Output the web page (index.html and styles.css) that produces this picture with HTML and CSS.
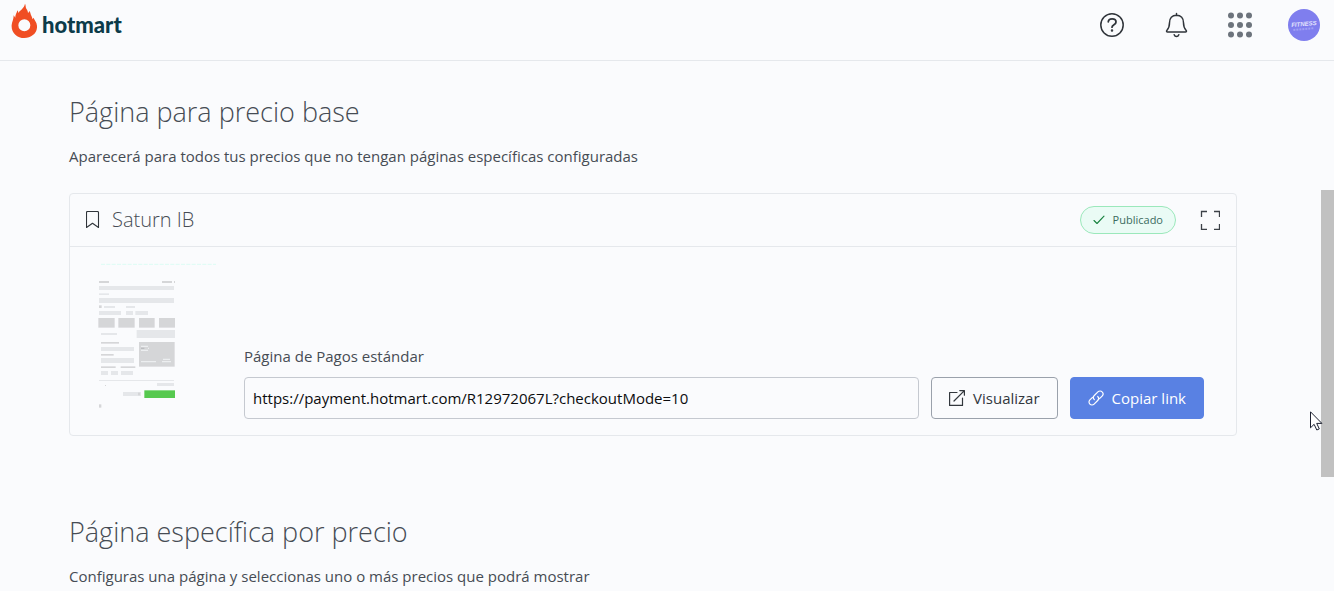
FILE: index.html
```html
<!DOCTYPE html>
<html lang="es">
<head>
    <meta charset="UTF-8">
    <meta name="viewport" content="width=device-width, initial-scale=1.0">
    <title>Hotmart - Páginas de pago</title>
    <link rel="stylesheet" href="styles.css">
</head>
<body>

    <header class="topbar">
        <a href="#" class="logo">
            <svg class="logo-flame" width="26" height="36" viewBox="0 0 78 108" aria-hidden="true">
                <path fill="#f04e23" fill-rule="evenodd" d="M42 2c3 5 1 11 5 17 2 3 4 7 4 11 2-1 3-3 4-6 4 4 3 9 6 14 2 4 3 7 3 11l3-5c4 8 10 13 11 24 2 22-16 37-38 37S0 89 2 66c1-10 6-16 6-29l5 7c-1-9 5-14 6-22 2 2 3 5 3 8 5-9 17-13 20-28zM40 49a18 18 0 1 0 0 36 18 18 0 0 0 0-36z"/>
            </svg>
            <span>hotmart</span>
        </a>
        <nav class="topbar-actions">
            <button class="icon-button" aria-label="Ayuda">
                <svg width="26" height="26" viewBox="0 0 26 26" fill="none" stroke="#2f343a" stroke-width="1.5" stroke-linecap="round">
                    <circle cx="13" cy="13" r="11.2"/>
                    <path stroke-width="1.8" d="M9.3 9.800c.1-2 1.700-3 3.800-3 2.300 0 3.900 1.200 3.900 3.100 0 3-4 2.500-4 5.300"/>
                    <circle cx="13" cy="18.600" r=".5" fill="#2f343a"/>
                </svg>
            </button>
            <button class="icon-button" aria-label="Notificaciones">
                <svg width="26" height="26" viewBox="0 0 26 26" fill="none" stroke="#2f343a" stroke-width="1.5" stroke-linecap="round" stroke-linejoin="round">
                    <path d="M13.500 1.500v2M13.500 3.300c-4.400 0-7 3-7 7.500 0 4.200-.7 5.500-2.500 7.400-.9 1-.4 1.900.6 1.900h17.800c1 0 1.500-.9.6-1.900-1.800-1.900-2.500-3.200-2.500-7.400 0-4.500-2.600-7.500-7-7.500z"/>
                    <path d="M11.200 22.700c.4 1.100 1.200 1.700 2.300 1.700s1.900-.6 2.300-1.700"/>
                </svg>
            </button>
            <button class="icon-button" aria-label="Aplicaciones">
                <svg width="26" height="26" viewBox="0 0 26 26" fill="#6c737c">
                    <circle cx="4" cy="3.500" r="3"/><circle cx="13" cy="3.500" r="3"/><circle cx="22" cy="3.500" r="3"/>
                    <circle cx="4" cy="13" r="3"/><circle cx="13" cy="13" r="3"/><circle cx="22" cy="13" r="3"/>
                    <circle cx="4" cy="22.500" r="3"/><circle cx="13" cy="22.500" r="3"/><circle cx="22" cy="22.500" r="3"/>
                </svg>
            </button>
            <button class="avatar" aria-label="Perfil">
                <svg width="32" height="32" viewBox="0 0 32 32">
                    <circle cx="16" cy="16" r="16" fill="#7f7eee"/>
                    <g transform="rotate(-5 16 16)">
                        <text class="avatar-text" x="16" y="17" text-anchor="middle">FITNESS</text>
                        <path d="M5 20h20" stroke="#a09ff4" stroke-width="2" stroke-dasharray="2 1"/>
                    </g>
                </svg>
            </button>
        </nav>
    </header>

    <main class="content">
        <section class="section">
            <h2 class="section-title">Página para precio base</h2>
            <p class="section-text">Aparecerá para todos tus precios que no tengan páginas específicas configuradas</p>

            <article class="card">
                <div class="card-header">
                    <svg width="14" height="18" viewBox="0 0 14 18" fill="none" stroke="#2f343a" stroke-width="1.1" stroke-linejoin="round" aria-hidden="true">
                        <path d="M.5 1.500c0-.6.400-1 1-1h10c.6 0 1 .4 1 1v15l-6-4.200-6 4.200z"/>
                    </svg>
                    <h3 class="card-title">Saturn IB</h3>
                    <span class="badge">
                        <svg width="12" height="10" viewBox="0 0 12 10" fill="none" stroke="#15803d" stroke-width="1.1" stroke-linecap="round" stroke-linejoin="round" aria-hidden="true">
                            <path d="M1 5.500l3 3L11 1.200"/>
                        </svg>
                        Publicado
                    </span>
                    <button class="icon-button" aria-label="Ampliar">
                        <svg width="20" height="20" viewBox="0 0 20 20" fill="none" stroke="#3c4147" stroke-width="1.3">
                            <path d="M1.500 7V1.500H7M14 1.500h5.500V7M19.500 14v5.500H14M7 19.500H1.500V14"/>
                        </svg>
                    </button>
                </div>

                <div class="card-body">
                    <!-- miniature of the checkout page -->
                    <svg class="preview" width="134" height="164" viewBox="6 -3 402 492" aria-hidden="true">
                        <path d="M51 25h345" stroke="#dcfcf4" stroke-width="3" stroke-dasharray="12 4"/>
                        <g fill="#e5e7ea">
                            <rect x="45" y="90" width="225" height="12"/>
                            <rect x="45" y="112" width="30" height="5"/>
                            <rect x="45" y="126" width="225" height="15"/>
                            <rect x="60" y="150" width="33" height="6"/>
                            <rect x="126" y="150" width="27" height="6"/>
                            <rect x="45" y="165" width="66" height="12"/>
                            <rect x="126" y="165" width="21" height="12"/>
                            <rect x="154" y="165" width="38" height="12"/>
                            <rect x="51" y="231" width="48" height="6"/>
                            <rect x="158" y="222" width="115" height="24"/>
                            <rect x="51" y="273" width="99" height="12"/>
                            <rect x="51" y="306" width="99" height="15"/>
                            <rect x="51" y="345" width="21" height="12"/>
                            <rect x="81" y="345" width="21" height="12"/>
                            <rect x="111" y="345" width="36" height="12"/>
                            <rect x="45" y="372" width="225" height="3"/>
                            <rect x="219" y="381" width="51" height="9"/>
                            <rect x="117" y="408" width="54" height="12"/>
                        </g>
                        <g fill="#d5d6d8">
                            <rect x="45" y="75" width="30" height="6"/>
                            <rect x="234" y="75" width="30" height="6"/>
                            <rect x="270" y="75" width="3" height="6"/>
                            <rect x="45" y="148" width="8" height="8"/>
                            <rect x="43" y="186" width="49" height="29"/>
                            <rect x="103" y="186" width="49" height="29"/>
                            <rect x="165" y="186" width="47" height="29"/>
                            <rect x="225" y="186" width="48" height="29"/>
                            <rect x="51" y="258" width="54" height="5"/>
                            <rect x="51" y="294" width="38" height="5"/>
                            <rect x="51" y="331" width="44" height="5"/>
                            <rect x="110" y="331" width="44" height="5"/>
                            <rect x="165" y="258" width="107" height="74"/>
                            <rect x="162" y="410" width="6" height="8"/>
                            <rect x="45" y="445" width="7" height="10"/>
                            <rect x="63" y="387" width="3" height="3"/>
                        </g>
                        <path d="M171 271h21M171 283h21M192 277h3M171 317h45M237 310h21M234 317h27" stroke="#eceef0" stroke-width="4"/>
                        <path d="M171 277h10" stroke="#bbbdc0" stroke-width="4"/>
                        <rect x="181" y="403" width="92" height="23" fill="#56c94f"/>
                    </svg>

                    <div class="field">
                        <label class="field-label" for="payment-link">Página de Pagos estándar</label>
                        <div class="field-row">
                            <input class="link-input" id="payment-link" type="text" value="https://payment.hotmart.com/R12972067L?checkoutMode=10" readonly>
                            <button class="button">
                                <svg width="16" height="16" viewBox="0 0 16 16" fill="none" stroke="currentColor" stroke-width="1.2" stroke-linecap="round" stroke-linejoin="round" aria-hidden="true">
                                    <path d="M8 2.500H.6v12.900h12.900V8M5 11L15.400.6M10.800.6h4.600v4.600"/>
                                </svg>
                                Visualizar
                            </button>
                            <button class="button primary">
                                <svg width="16" height="16" viewBox="0 0 16 16" fill="none" stroke="currentColor" stroke-width="1.2" stroke-linecap="round" aria-hidden="true">
                                    <path d="M6.300 9.700c-1.200-1.200-1.200-3 0-4.200l3.600-3.600c1.200-1.200 3.100-1.200 4.200 0 1.200 1.200 1.200 3 0 4.200L11.500 8.700"/>
                                    <path d="M9.700 6.300c1.200 1.200 1.200 3 0 4.200l-3.600 3.600c-1.200 1.200-3.100 1.200-4.200 0-1.200-1.200-1.200-3 0-4.200L4.500 7.300"/>
                                </svg>
                                Copiar link
                            </button>
                        </div>
                    </div>
                </div>
            </article>
        </section>

        <section class="section">
            <h2 class="section-title">Página específica por precio</h2>
            <p class="section-text">Configuras una página y seleccionas uno o más precios que podrá mostrar</p>
        </section>
    </main>

    <div class="scroll-thumb"></div>
    <svg class="cursor" width="13" height="20" viewBox="0 0 13 20" aria-hidden="true">
        <path d="M.5.800v16l3.600-3.500 2.700 5.700 2.500-1.100-2.600-5.500h5.200z" fill="#fff" stroke="#1c2030"/>
    </svg>

</body>
</html>
```
FILE: styles.css
```css
* {
    margin: 0;
    padding: 0;
    box-sizing: border-box;
}

body {
    background-color: #fafbfd;
    color: #464c54;
    font-family: "Open Sans", "Noto Sans", sans-serif;
    font-size: 15px;
    line-height: 22px;
}

button,
input {
    font: inherit;
    color: inherit;
}

svg {
    display: block;
    flex-shrink: 0;
}

.topbar {
    display: flex;
    justify-content: space-between;
    align-items: flex-start;
    padding: 3px 14px 19px 11px;
    border-bottom: 1px solid #e5e8ec;
}

.logo {
    display: flex;
    align-items: flex-end;
    gap: 5px;
    color: #0c3b4a;
    font-family: Lato, sans-serif;
    font-size: 22px;
    font-weight: 900;
    line-height: 28px;
    text-decoration: none;
}

.topbar-actions {
    display: flex;
    align-items: center;
    gap: 38px;
    padding-top: 6px;
}

.icon-button,
.avatar {
    background: none;
    border: none;
    cursor: pointer;
}

.avatar {
    margin-left: -3px;
}

.avatar-text {
    fill: #e3e3fd;
    font-family: "Liberation Sans", sans-serif;
    font-size: 6px;
    font-style: italic;
    font-weight: 700;
}

.content {
    padding: 32px 97px 0 69px;
}

.section + .section {
    margin-top: 77px;
}

.section-title {
    margin-bottom: 14px;
    font-size: 27px;
    font-weight: 300;
    line-height: 38px;
}

.card {
    margin-top: 26px;
    border: 1px solid #e5e8ec;
    border-radius: 4px;
}

.card-header {
    display: flex;
    align-items: center;
    padding: 12px 16px;
    border-bottom: 1px solid #e5e8ec;
}

.card-title {
    flex: 1;
    margin-left: 12px;
    font-size: 20px;
    font-weight: 300;
}

.badge {
    display: flex;
    align-items: center;
    gap: 8px;
    height: 28px;
    margin-right: 24px;
    padding: 0 12px;
    border: 1px solid #9be8bb;
    border-radius: 14px;
    background-color: #eafbf5;
    color: #3b6b5e;
    font-size: 11px;
}

.card-body {
    display: flex;
    align-items: flex-end;
    gap: 24px;
    padding: 8px 32px 16px 16px;
}

.field {
    flex: 1;
}

.field-label {
    display: block;
    margin-bottom: 10px;
}

.field-row {
    display: flex;
    gap: 12px;
}

.link-input {
    flex: 1;
    min-width: 0;
    height: 42px;
    padding: 0 8px;
    border: 1px solid #c5c9d0;
    border-radius: 4px;
    background-color: transparent;
    color: #0b0c0e;
}

.button {
    display: flex;
    align-items: center;
    gap: 8px;
    height: 42px;
    padding: 0 17px;
    border: 1px solid #9aa1ab;
    border-radius: 4px;
    background-color: transparent;
    color: #32373d;
    cursor: pointer;
}

.button.primary {
    border-color: #5981e3;
    background-color: #5981e3;
    color: #fff;
}

/* stays at the window edge, over the content */
.scroll-thumb {
    position: absolute;
    top: 190px;
    right: 0;
    width: 13px;
    height: 287px;
    background-color: #c1c1c1;
}

.cursor {
    position: absolute;
    top: 411px;
    right: 11px;
}
```
